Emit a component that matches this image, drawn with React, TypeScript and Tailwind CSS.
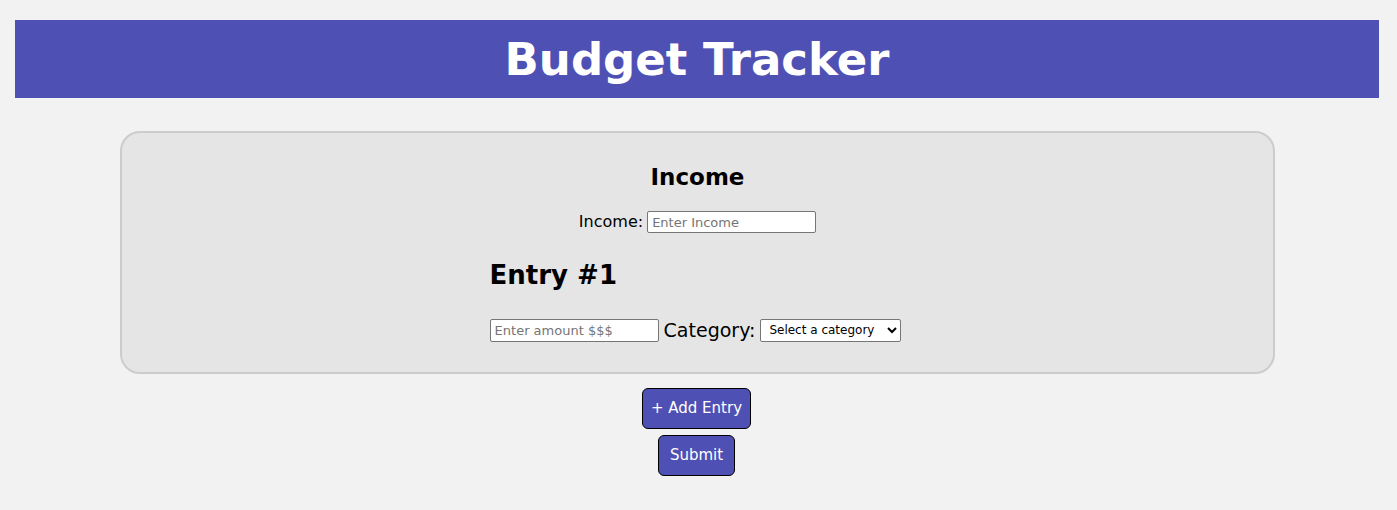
import React from 'react';

const App: React.FC = () => {
  return (
    <div className="min-h-screen bg-[#f2f2f2] pt-5 font-['DejaVu_Sans',sans-serif] text-black">
      {/* Header */}
      <header className="ml-[15px] w-[1364px] h-[78px] bg-[#4f50b3] flex items-center justify-center">
        <h1 className="text-[45px] font-bold text-white leading-none">Budget Tracker</h1>
      </header>

      {/* Form card */}
      <main className="mt-[33px] ml-[120px] w-[1155px] rounded-[20px] border-2 border-[#cccccc] bg-[#e5e5e5] pt-[30px] pb-[27px] flex flex-col items-center">
        <h2 className="text-[23px] font-bold leading-7">Income</h2>
        <div className="mt-[19px] flex items-center gap-1">
          <label className="text-base">Income:</label>
          <input
            type="text"
            placeholder="Enter Income"
            className="w-[169px] h-[22px] bg-white border border-[#767676] rounded-[2px] px-1 text-[13px] placeholder:text-[#757575]"
          />
        </div>

        <div className="mt-[23px] w-fit pr-[4px]">
          <h3 className="text-[26px] font-bold leading-9">Entry #1</h3>
          <div className="mt-[23px] flex items-center gap-[5px]">
            <input
              type="text"
              placeholder="Enter amount $$$"
              className="w-[169px] h-[23px] bg-white border border-[#767676] rounded-[2px] px-1 text-[13px] placeholder:text-[#757575]"
            />
            <label className="text-[19px]">Category:</label>
            <select className="w-[141px] h-[23px] bg-white border border-[#767676] rounded-[2px] text-[12px] pl-1">
              <option>Select a category</option>
            </select>
          </div>
        </div>
      </main>

      {/* Actions */}
      <div className="mt-[14px] pr-[4px] flex flex-col items-center gap-[6px]">
        <button className="h-[41px] px-[8px] bg-[#4f50b3] text-white text-[15px] border border-black rounded-[6px]">
          + Add Entry
        </button>
        <button className="h-[41px] px-[11px] bg-[#4f50b3] text-white text-[15px] border border-black rounded-[6px]">
          Submit
        </button>
      </div>
    </div>
  );
};

export default App;
